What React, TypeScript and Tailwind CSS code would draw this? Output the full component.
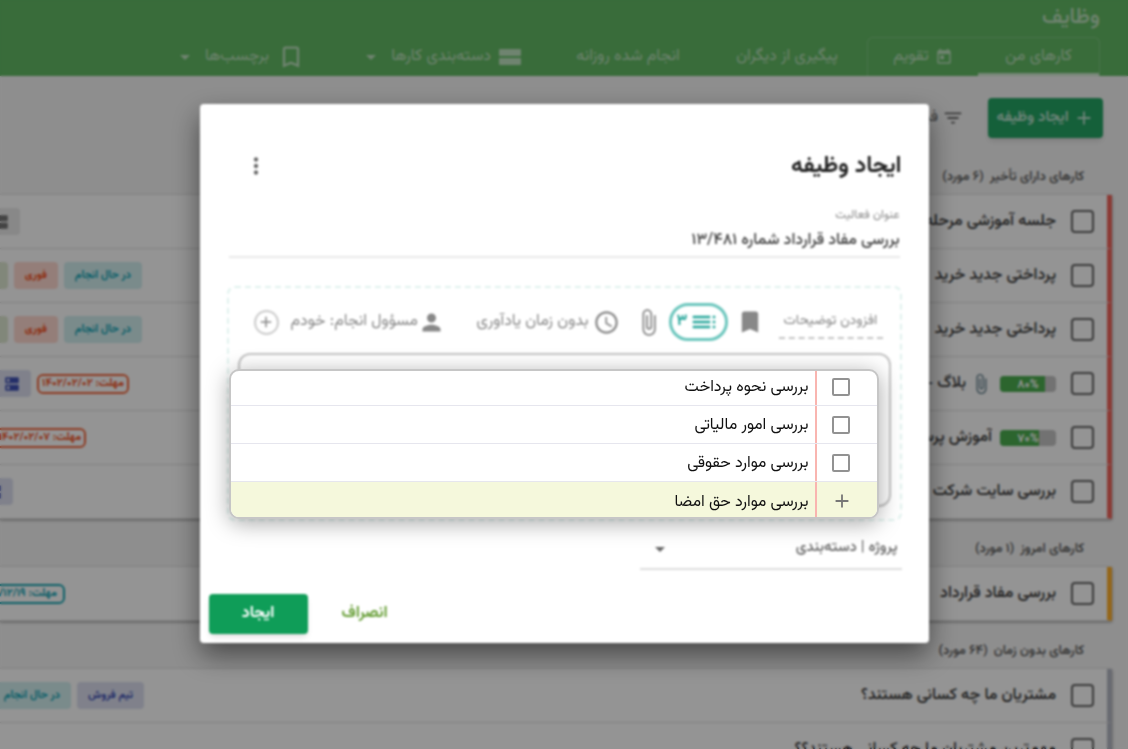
import React, { useState } from 'react';
import {
  MdAdd,
  MdArrowDropDown,
  MdAttachFile,
  MdBookmark,
  MdBookmarkBorder,
  MdDns,
  MdFilterList,
  MdMoreVert,
  MdPerson,
  MdAccessTime,
  MdToc,
  MdToday,
} from 'react-icons/md';

type Tag = { text?: string; style: string; outlined?: boolean; icon?: boolean };

type Task = {
  title: string;
  progress?: number;
  progressText?: string;
  attachment?: boolean;
  tags: Tag[];
  tagsOffset?: string;
};

const teal = 'bg-[#d2eff0] text-[#12a5b5]';
const coral = 'bg-[#ffd9d0] text-[#f4511e]';
const olive = 'bg-[#dfe8d2] text-[#689f38]';
const indigo = 'bg-[#dcdff0] text-[#3f51b5]';

const lateTasks: Task[] = [
  { title: 'جلسه آموزشی مرحله دوم', tags: [{ icon: true, style: 'bg-[#eaeaea] text-[#757575]' }], tagsOffset: 'ps-[124px]' },
  {
    title: 'پرداختی جدید خرید',
    tags: [{ text: 'در حال انجام', style: teal }, { text: 'فوری', style: coral }, { icon: true, style: olive }],
    tagsOffset: 'ps-[2px]',
  },
  {
    title: 'پرداختی جدید خرید',
    tags: [{ text: 'در حال انجام', style: teal }, { text: 'فوری', style: coral }, { icon: true, style: olive }],
    tagsOffset: 'ps-[2px]',
  },
  {
    title: 'بلاگ - تولید محتوا',
    progress: 80,
    progressText: '۸۰%',
    attachment: true,
    tags: [{ text: 'مهلت: ۱۴۰۲/۰۲/۰۲', outlined: true, style: 'border-[#f4673c] text-[#f4511e]' }, { icon: true, style: indigo }],
    tagsOffset: 'ps-[15px]',
  },
  {
    title: 'آموزش پرسنل',
    progress: 70,
    progressText: '۷۰%',
    tags: [{ text: 'مهلت: ۱۴۰۲/۰۲/۰۷', outlined: true, style: 'border-[#f4673c] text-[#f4511e]' }],
    tagsOffset: 'ps-[58px]',
  },
  { title: 'بررسی سایت شرکت', tags: [{ icon: true, style: indigo }], tagsOffset: 'ps-[131px]' },
];

const todayTasks: Task[] = [
  {
    title: 'بررسی مفاد قرارداد',
    tags: [{ text: 'مهلت: ۱۴۰۱/۱۲/۱۹', outlined: true, style: 'border-[#16a6b4] text-[#12a5b5]' }],
    tagsOffset: 'ps-[79px]',
  },
];

const untimedTasks: Task[] = [
  {
    title: 'مشتریان ما چه کسانی هستند؟',
    tags: [{ text: 'تیم فروش', style: indigo }, { text: 'در حال انجام', style: teal }],
  },
  { title: 'مهم‌ترین مشتریان ما چه کسانی هستند؟؟', tags: [] },
];

const TagChip = ({ tag }: { tag: Tag }) => {
  if (tag.icon) {
    return (
      <span className={`flex h-[27px] w-[42px] shrink-0 items-center rounded-sm ps-[10px] ${tag.style}`}>
        <MdDns size={18} />
      </span>
    );
  }
  if (tag.outlined) {
    return (
      <span className={`flex h-5 w-[92px] shrink-0 items-center justify-center whitespace-nowrap rounded-md border-2 pt-[2px] text-[11px] font-bold ${tag.style}`}>
        {tag.text}
      </span>
    );
  }
  return (
    <span className={`flex h-[27px] shrink-0 items-center whitespace-nowrap rounded-sm px-[11px] pt-[2px] text-[11px] font-bold ${tag.style}`}>
      {tag.text}
    </span>
  );
};

const TaskRow = ({ task, bar }: { task: Task; bar: string }) => (
  <li className={`flex h-[54px] items-center border-b border-s-[5px] border-b-[#dedede] bg-white ps-[13px] ${bar}`}>
    <input
      type="checkbox"
      aria-label={task.title}
      className="size-[23px] shrink-0 appearance-none rounded-sm border-2 border-[#666] bg-transparent"
    />
    <div className="flex min-w-0 flex-1 items-center gap-2 overflow-hidden ps-[15px]">
      {task.progress && (
        <div dir="ltr" className="relative h-4 w-14 shrink-0 rounded-sm bg-[#c4c4c4]">
          <div className="h-full rounded-s-sm bg-[#4caf50]" style={{ width: `${task.progress}%` }} />
          <span className="absolute inset-0 flex items-center justify-center pt-[2px] text-[12px] font-bold leading-4 text-white">
            {task.progressText}
          </span>
        </div>
      )}
      {task.attachment && <MdAttachFile size={22} className="-me-1 shrink-0 text-[#607d8b]" />}
      <span className="truncate text-[16px] font-medium leading-6 text-[#3a3a3a]">{task.title}</span>
    </div>
    <div className={`flex w-36 shrink-0 items-center gap-[6px] overflow-hidden ${task.tagsOffset ?? ''}`}>
      {task.tags.map((tag, i) => <TagChip key={i} tag={tag} />)}
    </div>
  </li>
);

const TaskSection = ({ title, count, tasks, bar }: { title: string; count: string; tasks: Task[]; bar: string }) => (
  <section>
    <h2 className="flex h-12 items-end gap-[6px] pb-2 ps-[44px] text-[13px] font-medium leading-5 text-[#555]">
      <span>{title}</span>
      <span>({count} مورد)</span>
    </h2>
    <ul className="ms-4 shadow-[0_1px_3px_rgba(0,0,0,0.4)]">
      {tasks.map((task, i) => <TaskRow key={i} task={task} bar={bar} />)}
    </ul>
  </section>
);

const Header = () => (
  <header className="flex h-[76px] flex-col justify-between bg-[#62ba64] ps-7 text-white/60">
    <h1 className="h-[37px] text-[22px] font-medium leading-9">وظایف</h1>
    <nav className="flex h-[39px] items-stretch whitespace-nowrap text-[16px]">
      <div className="flex w-[233px] rounded-t-md border border-b-0 border-white/20">
        <a href="#mine" className="flex w-[121px] items-center justify-center border-b-[3px] border-white/70 pt-[3px]">کارهای من</a>
        <a href="#calendar" className="flex flex-1 items-center justify-center gap-[6px]">
          <MdToday size={18} />
          تقویم
        </a>
      </div>
      <a href="#others" className="flex w-[160px] items-center justify-center">پیگیری از دیگران</a>
      <a href="#daily" className="flex w-[158px] items-center justify-center">انجام شده روزانه</a>
      <button type="button" className="ms-7 flex w-[160px] items-center gap-2">
        <svg width="22" height="16" viewBox="0 0 22 16" fill="currentColor" className="shrink-0">
          <rect width="22" height="7" rx="1" />
          <rect y="9" width="22" height="7" rx="1" />
        </svg>
        دسته‌بندی کارها
        <MdArrowDropDown size={24} className="ms-auto shrink-0" />
      </button>
      <button type="button" className="ms-[60px] flex w-[122px] items-center gap-2">
        <MdBookmarkBorder size={28} className="-mx-1 shrink-0" />
        <span className="ps-1">برچسب‌ها</span>
        <MdArrowDropDown size={24} className="ms-auto shrink-0" />
      </button>
    </nav>
  </header>
);

const CreateDialog = () => (
  <div role="dialog" aria-label="ایجاد وظیفه" className="rounded-sm bg-white shadow-[0_12px_28px_rgba(0,0,0,0.5)] blur-[1px]">
    <div className="flex items-center justify-between px-[27px] pt-[46px]">
      <h2 className="text-[23px] font-bold leading-8 text-[#222]">ایجاد وظیفه</h2>
      <button type="button" aria-label="گزینه‌ها" className="me-4 text-[#666]"><MdMoreVert size={26} /></button>
    </div>

    <div className="mx-[29px] mt-6 border-b-2 border-[#e8e8e8]">
      <label htmlFor="task-title" className="block text-[12px] leading-[18px] text-[#888]">عنوان فعالیت</label>
      <input
        id="task-title"
        defaultValue="بررسی مفاد قرارداد شماره ۱۳/۴۸۱"
        className="block h-8 w-full text-[16px] font-medium text-[#444] outline-none"
      />
    </div>

    <div className="mx-[27px] mt-7 rounded-lg border-2 border-dashed border-[#e0f2ee] px-[9px] pb-[12px] pt-[15px]">
      <div className="flex h-[38px] items-center whitespace-nowrap pe-4 ps-2 text-[16px] text-[#888]">
        <button type="button" className="h-[34px] w-[104px] border-b-2 border-dashed border-[#c4c4c4] text-[14px]">افزودن توضیحات</button>
        <MdBookmark size={28} className="ms-[15px] shrink-0" />
        <button type="button" className="ms-2 flex h-[38px] w-[59px] items-center justify-center gap-[2px] rounded-full border-[3px] border-[#6bc6bd] font-bold text-[#26a69a]">
          <MdToc size={30} className="shrink-0" />
          ۳
        </button>
        <MdAttachFile size={29} className="ms-[6px] shrink-0" />
        <button type="button" className="ms-[14px] flex items-center gap-1">
          <MdAccessTime size={27} />
          بدون زمان یادآوری
        </button>
        <button type="button" className="ms-auto flex items-center">
          <MdPerson size={27} />
          مسؤول انجام: خودم
        </button>
        <button type="button" aria-label="افزودن مسؤول" className="ms-3 flex size-[25px] items-center justify-center rounded-full border-2 border-[#ccc]">
          <MdAdd size={18} />
        </button>
      </div>
      <div className="mt-[12px] h-[154px] rounded-xl border-2 border-[#c4c4c4]" />
    </div>

    <div className="relative mx-[27px] mt-[7px] w-[262px] border-b-2 border-[#ddd]">
      <select aria-label="پروژه | دسته‌بندی" className="block h-[40px] w-full appearance-none bg-transparent px-1 text-[15px] font-medium text-[#666]">
        <option>پروژه | دسته‌بندی</option>
      </select>
      <MdArrowDropDown size={24} className="pointer-events-none absolute end-2 top-[9px] text-[#666]" />
    </div>

    <div className="flex items-center justify-end gap-[34px] px-[9px] pb-[9px] pt-6 text-[16px] font-bold">
      <button type="button" className="text-[#689f38]">انصراف</button>
      <button type="button" className="h-10 w-[99px] rounded-sm bg-[#0f9d58] text-white shadow-md">ایجاد</button>
    </div>
  </div>
);

const Checklist = () => {
  const [draft, setDraft] = useState('بررسی موارد حق امضا');
  const items = ['بررسی نحوه پرداخت', 'بررسی امور مالیاتی', 'بررسی موارد حقوقی'];

  return (
    <div className="absolute end-[29px] start-[50px] top-[265px] flex h-[150px] flex-col justify-center overflow-hidden rounded-[10px] border-2 border-[#c6c6c6] bg-white text-[16px] text-[#111] shadow-[0_4px_22px_rgba(0,0,0,0.35)]">
      {items.map((item) => (
        <label key={item} className="flex h-[38px] shrink-0 items-stretch border-b border-[#e6e6ee]">
          <span className="flex w-[62px] items-center border-e-2 border-[#f9b5b0] ps-[27px]">
            <input type="checkbox" className="size-[18px] appearance-none rounded-xs border-2 border-[#929292]" />
          </span>
          <span className="flex items-center ps-[6px] pt-[3px]">{item}</span>
        </label>
      ))}
      <div className="flex h-[38px] shrink-0 items-stretch bg-[#f5f8dc]">
        <label htmlFor="new-item" className="flex w-[62px] items-center border-e-2 border-[#f9b5b0] ps-[24px] text-[#777]">
          <MdAdd size={22} />
        </label>
        <input
          id="new-item"
          aria-label="مورد جدید"
          value={draft}
          onChange={(e) => setDraft(e.target.value)}
          className="min-w-0 flex-1 bg-transparent ps-[6px] pt-[3px] outline-none"
        />
      </div>
    </div>
  );
};

export default function App() {
  return (
    <div dir="rtl" className="relative h-screen overflow-hidden bg-[#f5f5f5] font-['Vazirmatn','Noto_Sans_Arabic','DejaVu_Sans',sans-serif]">
      <main>
        <Header />
        <div className="flex h-[71px] items-end gap-6 pb-[9px] ps-[25px]">
          <button type="button" className="flex h-10 w-[115px] items-center justify-center gap-1 whitespace-nowrap rounded-sm bg-[#25a565] text-[15px] font-bold text-white/70 shadow-md">
            <MdAdd size={22} />
            ایجاد وظیفه
          </button>
          <button type="button" className="flex h-10 items-center gap-1 text-[16px] text-[#666]">
            <MdFilterList size={22} />
            فیلتر
          </button>
        </div>
        <TaskSection title="کارهای دارای تأخیر" count="۶" tasks={lateTasks} bar="border-s-[#f0655c]" />
        <TaskSection title="کارهای امروز" count="۱" tasks={todayTasks} bar="border-s-[#ffb02e]" />
        <TaskSection title="کارهای بدون زمان" count="۶۴" tasks={untimedTasks} bar="border-s-[#b5b8c4]" />
      </main>

      <div className="fixed inset-0 flex items-center justify-center bg-black/42 pb-[2px] backdrop-blur-[1px]">
        <div className="relative w-full max-w-[729px]">
          <CreateDialog />
          <Checklist />
        </div>
      </div>
    </div>
  );
}
